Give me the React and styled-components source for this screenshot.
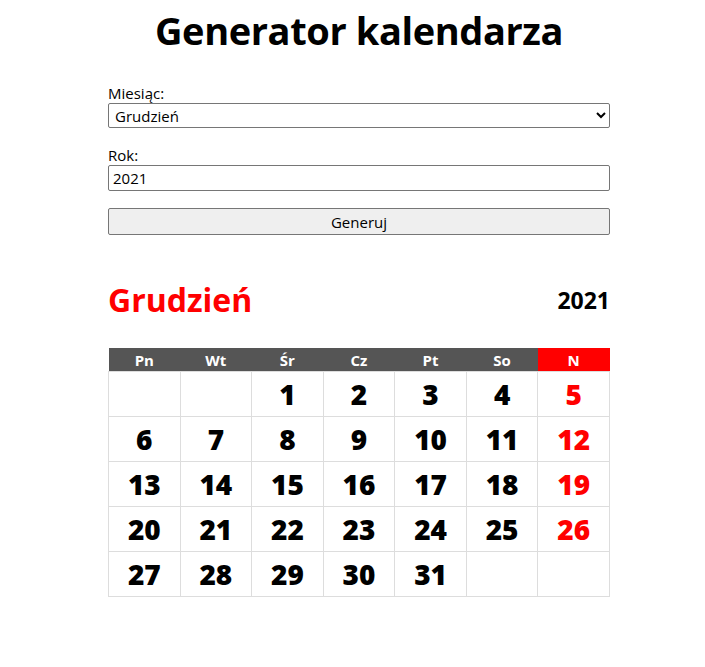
import React, { useState } from 'react'
import styled, { createGlobalStyle } from 'styled-components'

const GlobalStyle = createGlobalStyle`
    body {
        margin: 0;
        background: #ffffff;
        font-family: "Open Sans", "Noto Sans", sans-serif;
        color: #000000;
    }
`

const Page = styled.div`
    display: flex;
    justify-content: center;
    padding-left: 13px;
`

const Wrapper = styled.div`
    width: 502px;
`

const Title = styled.h1`
    margin: 6px 0 29px;
    font-size: 38px;
    line-height: 48px;
    font-weight: 700;
    text-align: center;
    letter-spacing: -0.4px;
`

const Field = styled.div`
    display: flex;
    flex-direction: column;
    margin-bottom: 17px;
`

const Label = styled.label`
    font-size: 15px;
    line-height: 20px;
`

const Select = styled.select`
    height: 25px;
    font-family: inherit;
    font-size: 15px;
    padding: 0 2px;
    border: 1px solid #767676;
    border-radius: 2px;
    background: #ffffff;
`

const Input = styled.input`
    height: 26px;
    box-sizing: border-box;
    font-family: inherit;
    font-size: 15px;
    padding: 0 4px;
    border: 1px solid #767676;
    border-radius: 2px;
`

const Button = styled.button`
    width: 100%;
    height: 27px;
    font-family: inherit;
    font-size: 15px;
    background: #efefef;
    border: 1px solid #767676;
    border-radius: 2px;
    color: #000000;
`

const CalendarHead = styled.div`
    display: flex;
    justify-content: space-between;
    align-items: center;
    margin: 44px 0 28px;
`

const MonthName = styled.h2`
    margin: 0;
    color: #ff0000;
    font-size: 32px;
    line-height: 41px;
    font-weight: 700;
`

const YearName = styled.h3`
    margin: 0;
    font-size: 23px;
    line-height: 30px;
    font-weight: 700;
`

const Table = styled.table`
    width: 502px;
    border-collapse: collapse;
    table-layout: fixed;
`

const HeadCell = styled.th`
    height: 23px;
    padding: 0;
    background: ${({ $sunday }) => ($sunday ? '#ff0000' : '#555555')};
    color: #ffffff;
    font-size: 15px;
    font-weight: 700;
`

const DayCell = styled.td`
    height: 44px;
    padding: 0;
    border: 1px solid #dddddd;
    text-align: center;
    color: ${({ $sunday }) => ($sunday ? '#ff0000' : '#000000')};
    font-size: 28px;
    font-weight: 800;
`

const MONTHS = [
    'Styczeń', 'Luty', 'Marzec', 'Kwiecień', 'Maj', 'Czerwiec',
    'Lipiec', 'Sierpień', 'Wrzesień', 'Październik', 'Listopad', 'Grudzień',
]
const DAYS = ['Pn', 'Wt', 'Śr', 'Cz', 'Pt', 'So', 'N']

const buildWeeks = (month, year) => {
    const first = (new Date(year, month, 1).getDay() + 6) % 7
    const count = new Date(year, month + 1, 0).getDate()
    const cells = Array(first).fill(null)
    for (let d = 1; d <= count; d++) cells.push(d)
    while (cells.length % 7) cells.push(null)
    const weeks = []
    for (let i = 0; i < cells.length; i += 7) weeks.push(cells.slice(i, i + 7))
    return weeks
}

export default function App() {
    const [month, setMonth] = useState(11)
    const [year, setYear] = useState('2021')
    const weeks = buildWeeks(month, Number(year))

    return (
        <Page>
            <GlobalStyle />
            <Wrapper>
                <Title>Generator kalendarza</Title>
                <Field>
                    <Label>Miesiąc:</Label>
                    <Select value={month} onChange={e => setMonth(Number(e.target.value))}>
                        {MONTHS.map((m, i) => <option key={m} value={i}>{m}</option>)}
                    </Select>
                </Field>
                <Field>
                    <Label>Rok:</Label>
                    <Input value={year} onChange={e => setYear(e.target.value)} />
                </Field>
                <Button>Generuj</Button>
                <CalendarHead>
                    <MonthName>{MONTHS[month]}</MonthName>
                    <YearName>{year}</YearName>
                </CalendarHead>
                <Table>
                    <thead>
                        <tr>
                            {DAYS.map((d, i) => <HeadCell key={d} $sunday={i === 6}>{d}</HeadCell>)}
                        </tr>
                    </thead>
                    <tbody>
                        {weeks.map((w, wi) => (
                            <tr key={wi}>
                                {w.map((d, i) => <DayCell key={i} $sunday={i === 6}>{d}</DayCell>)}
                            </tr>
                        ))}
                    </tbody>
                </Table>
            </Wrapper>
        </Page>
    )
}
